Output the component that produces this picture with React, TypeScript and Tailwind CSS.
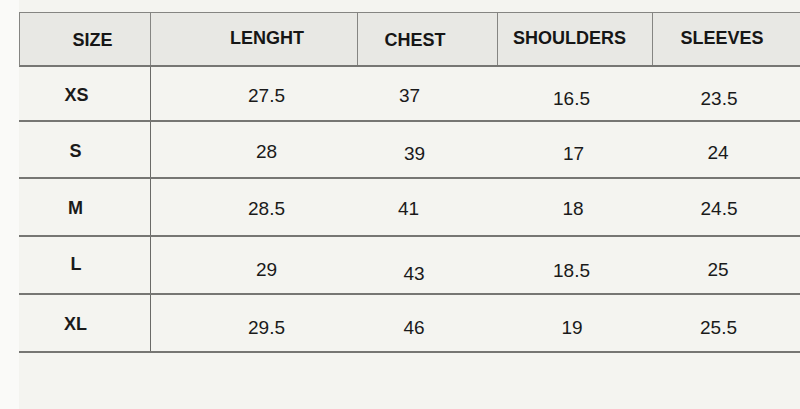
import React from "react";

type Cell = { t: string; c: string };

const header: Cell[] = [
  { t: "SIZE", c: "pl-[15px] pt-[2px]" },
  { t: "LENGHT", c: "pl-[26px] pb-[2px] border-l border-[#858582]" },
  { t: "CHEST", c: "pr-[25px] pt-[1px] border-l border-[#858582]" },
  { t: "SHOULDERS", c: "pr-[11px] pb-[2px] border-l border-[#858582]" },
  { t: "SLEEVES", c: "pr-[9px] pb-[2px] border-l border-[#858582]" },
];

const rows: { h: string; cells: Cell[] }[] = [
  {
    h: "h-[55px]",
    cells: [
      { t: "XS", c: "pr-[16px] pt-[3px]" },
      { t: "27.5", c: "pl-[25px] pt-[3px]" },
      { t: "37", c: "pr-[35px] pt-[3px]" },
      { t: "16.5", c: "pr-[6px] pt-[10px]" },
      { t: "23.5", c: "pr-[14px] pt-[10px]" },
    ],
  },
  {
    h: "h-[57px]",
    cells: [
      { t: "S", c: "pr-[18px] pt-[3px]" },
      { t: "28", c: "pl-[25px] pt-[3px]" },
      { t: "39", c: "pr-[25px] pt-[7px]" },
      { t: "17", c: "pr-[2px] pt-[7px]" },
      { t: "24", c: "pr-[16px] pt-[5px]" },
    ],
  },
  {
    h: "h-[58px]",
    cells: [
      { t: "M", c: "pr-[18px] pt-[2px]" },
      { t: "28.5", c: "pl-[25px] pt-[2px]" },
      { t: "41", c: "pr-[37px] pt-[2px]" },
      { t: "18", c: "pr-[3px] pt-[2px]" },
      { t: "24.5", c: "pr-[14px] pt-[2px]" },
    ],
  },
  {
    h: "h-[58px]",
    cells: [
      { t: "L", c: "pr-[17px] pb-[3px]" },
      { t: "29", c: "pl-[25px] pt-[8px]" },
      { t: "43", c: "pr-[26px] pt-[16px]" },
      { t: "18.5", c: "pr-[6px] pt-[10px]" },
      { t: "25", c: "pr-[16px] pt-[9px]" },
    ],
  },
  {
    h: "h-[58px]",
    cells: [
      { t: "XL", c: "pr-[18px] pt-[1px]" },
      { t: "29.5", c: "pl-[25px] pt-[8px]" },
      { t: "46", c: "pr-[26px] pt-[8px]" },
      { t: "19", c: "pr-[5px] pt-[8px]" },
      { t: "25.5", c: "pr-[15px] pt-[8px]" },
    ],
  },
];

export default function App() {
  return (
    <div
      className="flex h-[409px] w-[800px] bg-[#fafaf8] overflow-hidden"
      style={{ fontFamily: '"Liberation Sans", Arial, sans-serif' }}
    >
      <div className="w-[19px] shrink-0" />
      <div className="flex-1 bg-[#f4f4f0] pt-[12px]">
        <div className="grid grid-cols-[130px_207px_140px_155px_1fr] h-[55px] bg-[#e8e8e4] border-t border-l border-b-2 border-[#858582] border-b-[#767673]">
          {header.map((h) => (
            <div
              key={h.t}
              className={`flex items-center justify-center text-[18px] font-bold leading-none text-[#161616] ${h.c}`}
            >
              {h.t}
            </div>
          ))}
        </div>
        {rows.map((r, i) => (
          <div
            key={i}
            className={`grid grid-cols-[131px_207px_140px_155px_1fr] ${r.h} border-b-2 border-[#767673]`}
          >
            {r.cells.map((c, j) => (
              <div
                key={j}
                className={`flex items-center justify-center leading-none text-[#1a1a1a] ${
                  j === 0 ? "text-[18px] font-bold" : "text-[19px]"
                } ${j === 1 ? "border-l border-[#6a6a67]" : ""} ${c.c}`}
              >
                {c.t}
              </div>
            ))}
          </div>
        ))}
      </div>
    </div>
  );
}
